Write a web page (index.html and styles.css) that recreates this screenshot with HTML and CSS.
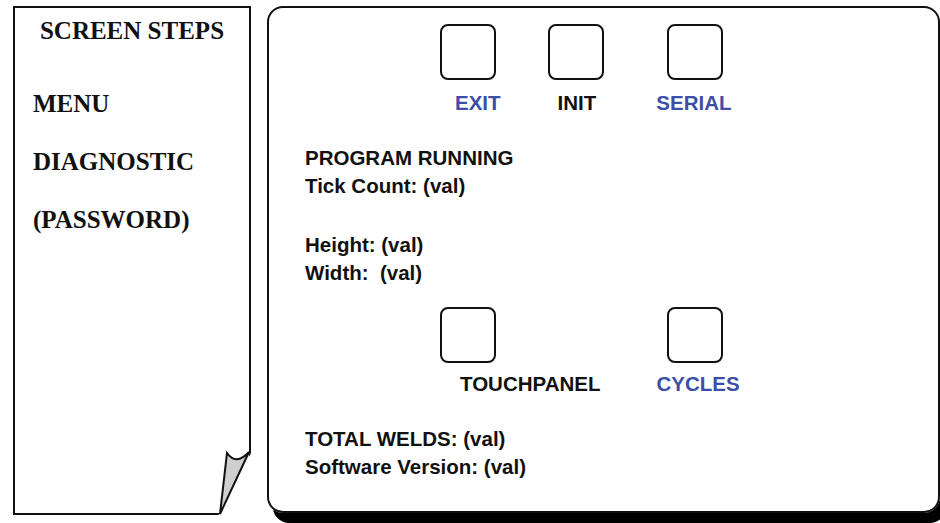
FILE: index.html
```html
<!DOCTYPE html>
<html lang="en">
<head>
    <meta charset="UTF-8">
    <title>Diagnostic screen</title>
    <link rel="stylesheet" href="styles.css">
</head>
<body>
<div class="steps">
    <h1>SCREEN STEPS</h1>
    <ul>
        <li>MENU</li>
        <li>DIAGNOSTIC</li>
        <li>(PASSWORD)</li>
    </ul>
    <svg class="fold" width="36" height="66" viewBox="0 0 36 66">
        <polygon points="3,67 37,67 37,2" fill="#fff"/>
        <path d="M5,65 L12,4 Q21,17 34,3 Z" fill="#cfcfcf" stroke="#111" stroke-width="2" stroke-linejoin="miter"/>
    </svg>
</div>
<div class="screen">
    <div class="keys keys-top">
        <span class="key"></span>
        <span class="key"></span>
        <span class="key"></span>
    </div>
    <div class="labels labels-top">
        <span class="blue exit">EXIT</span>
        <span class="init">INIT</span>
        <span class="blue serial">SERIAL</span>
    </div>
    <div class="info">
        <p>PROGRAM RUNNING</p>
        <p>Tick Count: (val)</p>
    </div>
    <div class="info">
        <p>Height: (val)</p>
        <p>Width:&nbsp; (val)</p>
    </div>
    <div class="keys keys-bottom">
        <span class="key"></span>
        <span class="key"></span>
    </div>
    <div class="labels labels-bottom">
        <span class="touch">TOUCHPANEL</span>
        <span class="blue cycles">CYCLES</span>
    </div>
    <div class="info">
        <p>TOTAL WELDS: (val)</p>
        <p>Software Version: (val)</p>
    </div>
</div>
</body>
</html>
```
FILE: styles.css
```css
* {
    margin: 0;
    padding: 0;
    list-style: none;
    box-sizing: border-box;
}

body {
    width: 940px;
    height: 523px;
    overflow: hidden;
    background: #fff;
    display: flex;
    gap: 16px;
    padding: 6px 0 0 13px;
    color: #111;
}

/* left sheet */
.steps {
    position: relative;
    width: 238px;
    height: 509px;
    border: 2px solid #111;
    padding: 8px 0 0 18px;
    font-family: "Liberation Serif", "Times New Roman", serif;
    font-weight: bold;
    font-size: 25px;
    line-height: 30px;
}

.steps h1 {
    font-size: 25px;
    text-align: center;
    margin-left: -18px;
}

.steps ul {
    margin-top: 43px;
}

.steps li + li {
    margin-top: 28px;
}

.fold {
    position: absolute;
    right: -2px;
    bottom: -2px;
}

/* right screen */
.screen {
    width: 673px;
    height: 507px;
    border: 2px solid #111;
    border-radius: 16px;
    box-shadow: 6px 10px 0 #000;
    padding: 16px 0 0 36px;
    font-family: "Liberation Sans", Arial, sans-serif;
    font-weight: bold;
    font-size: 20.5px;
    line-height: 28px;
}

.keys {
    display: flex;
    margin-left: 135px;
}

.key {
    width: 56px;
    height: 56px;
    border: 2px solid #111;
    border-radius: 8px;
}

.keys-top .key:nth-child(2) {
    margin-left: 52px;
}

.keys-top .key:nth-child(3) {
    margin-left: 63px;
}

.keys-bottom {
    margin-top: 20px;
}

.keys-bottom .key:nth-child(2) {
    margin-left: 171px;
}

.labels {
    display: flex;
    line-height: 24px;
    margin-top: 11px;
}

.blue {
    color: #3b4fa6;
}

.exit {
    margin-left: 150px;
}

.init {
    margin-left: 57px;
}

.serial {
    margin-left: 60px;
}

.labels-bottom {
    margin-top: 9px;
}

.touch {
    margin-left: 155px;
}

.cycles {
    margin-left: 56px;
}

.info {
    margin-top: 29px;
}

.info + .info {
    margin-top: 31px;
}

.labels-bottom + .info {
    margin-top: 29px;
}
```
